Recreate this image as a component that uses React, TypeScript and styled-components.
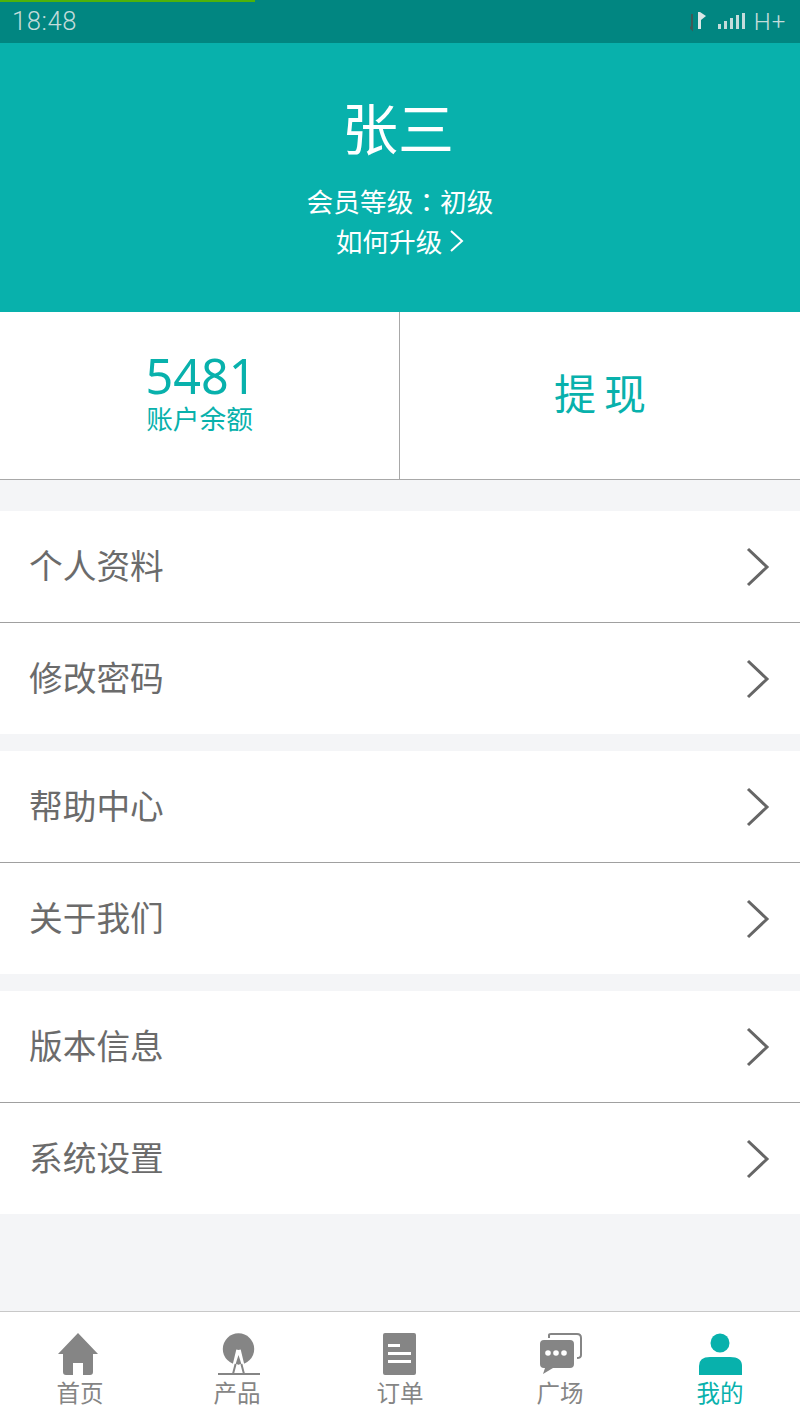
import React from "react";
import styled, { createGlobalStyle } from "styled-components";

const CJK = `"Noto Sans CJK SC", "Noto Sans", sans-serif`;
const TEAL = "#08b1ac";
const GREY = "#858585";

const GlobalStyle = createGlobalStyle`
  html, body {
    margin: 0;
    padding: 0;
    background: #f4f5f7;
    font-family: ${CJK};
  }
`;

const Page = styled.div`
  width: 800px;
  height: 1422px;
  display: flex;
  flex-direction: column;
  overflow: hidden;
  background: #f4f5f7;
`;

const StatusBar = styled.div`
  position: relative;
  height: 43px;
  flex: none;
  display: flex;
  align-items: center;
  justify-content: space-between;
  padding: 0 14px 0 12px;
  box-sizing: border-box;
  background: #018681;
  color: #c4dcdb;
`;

const LoadBar = styled.div`
  position: absolute;
  left: 0;
  top: 0;
  width: 255px;
  height: 2px;
  background: #4fb30a;
`;

const Clock = styled.span`
  font: 300 25.6px/1 Roboto, sans-serif;
  letter-spacing: 0.6px;
`;

const StatusRight = styled.div`
  display: flex;
  align-items: center;
  gap: 8px;
`;

const NetType = styled.span`
  font: 300 24px/1 Roboto, sans-serif;
  letter-spacing: 0.8px;
`;

const Header = styled.div`
  height: 269px;
  flex: none;
  display: flex;
  flex-direction: column;
  align-items: center;
  background: ${TEAL};
  color: #fff;
`;

const Name = styled.div`
  margin-top: 45px;
  margin-right: 4px;
  font-size: 56px;
  line-height: 76px;
`;

const Level = styled.div`
  margin-top: 17px;
  font-size: 26.7px;
  line-height: 40px;
`;

const Colon = styled.span`
  font-family: "Noto Sans CJK TC", sans-serif;
`;

const Upgrade = styled.div`
  display: flex;
  align-items: center;
  gap: 7px;
  font-size: 26.7px;
  line-height: 40px;
`;

const Stats = styled.div`
  height: 168px;
  flex: none;
  display: flex;
  box-sizing: border-box;
  background: #fff;
  border-bottom: 1px solid #a8a8a8;
  color: ${TEAL};
`;

const StatCell = styled.div`
  width: 50%;
  box-sizing: border-box;
  display: flex;
  flex-direction: column;
  align-items: center;
  justify-content: center;
  padding-bottom: 8px;
  &:first-child {
    border-right: 1px solid #a8a8a8;
  }
`;

const Balance = styled.div`
  margin-left: 3px;
  font: 400 48.5px/50px "Noto Sans", sans-serif;
`;

const BalanceLabel = styled.div`
  margin-top: 3px;
  font-size: 26.7px;
  line-height: 30px;
`;

const Withdraw = styled.div`
  font-size: 42px;
  line-height: 50px;
  letter-spacing: 8px;
  margin-right: -8px;
`;

const Group = styled.div<{ $gap: number }>`
  flex: none;
  margin-top: ${(p) => p.$gap}px;
  display: flex;
  flex-direction: column;
  background: #fff;
`;

const Row = styled.div`
  height: 111px;
  box-sizing: border-box;
  display: flex;
  align-items: center;
  justify-content: space-between;
  padding: 0 30px 0 29px;
  font-size: 33.7px;
  color: #6b6b6b;
  & + & {
    height: 112px;
    border-top: 1px solid #a0a0a0;
  }
`;

const RowLabel = styled.span`
  margin-bottom: 4px;
`;

const Spacer = styled.div`
  flex: 1;
`;

const TabBar = styled.div`
  height: 111px;
  flex: none;
  display: flex;
  box-sizing: border-box;
  background: #fff;
  border-top: 1px solid #c8c8c8;
`;

const Tab = styled.div<{ $active?: boolean }>`
  flex: 1;
  display: flex;
  flex-direction: column;
  align-items: center;
  padding-top: 21px;
  color: ${(p) => (p.$active ? TEAL : GREY)};
`;

const TabIcon = styled.svg`
  display: block;
  width: 48px;
  height: 44px;
`;

const TabLabel = styled.div<{ $shift?: number }>`
  margin-top: -1px;
  margin-right: ${(p) => p.$shift ?? 0}px;
  font-size: 23.5px;
  line-height: 32px;
`;

const Chevron = () => (
  <svg width="24" height="40" viewBox="0 0 24 40" fill="none">
    <path d="M2 2 L21 20 L2 38" stroke="#666" strokeWidth="3" />
  </svg>
);

const SmallChevron = () => (
  <svg width="15" height="24" viewBox="0 0 15 24" fill="none">
    <path d="M2 2 L13 12 L2 22" stroke="#fff" strokeWidth="2" />
  </svg>
);

const SignalIcons = () => (
  <svg width="56" height="25" viewBox="0 0 56 25">
    <path d="M2 5 V20 L0 18" fill="none" stroke="#3d5a58" strokeWidth="2" />
    <path d="M8 3 H10 L16 7 L11 11 V20 H8 Z" fill="#dbe8e7" />
    <g fill="#c4dcdb">
      <rect x="28" y="15" width="3" height="5" />
      <rect x="34" y="12" width="3" height="8" />
      <rect x="40" y="9" width="3" height="11" />
      <rect x="46" y="6" width="3" height="14" />
      <rect x="52" y="4" width="3" height="16" />
    </g>
  </svg>
);

const HomeIcon = () => (
  <TabIcon viewBox="0 0 48 44" fill="currentColor">
    <path d="M22 0 L42 21 H37 V39 Q37 42 34 42 H27 V30 H17 V42 H10 Q7 42 7 39 V21 H2 Z" />
  </TabIcon>
);

const ProductIcon = () => (
  <TabIcon viewBox="0 0 48 44" fill="currentColor">
    <circle cx="22.5" cy="16" r="15.7" />
    <path d="M22.5 17 L17 40 M22.5 17 L28 40" fill="none" stroke="#fff" strokeWidth="4.5" />
    <path d="M22.5 22 L19.6 31 H25.4 Z" />
    <path d="M19.6 31 L17 41 M25.4 31 L28 41" fill="none" stroke="currentColor" strokeWidth="2" />
    <rect x="2" y="40" width="42" height="2" />
  </TabIcon>
);

const OrderIcon = () => (
  <TabIcon viewBox="0 0 48 44" fill="currentColor">
    <path
      fillRule="evenodd"
      d="M9 0 H38 Q40 0 40 2 V40 Q40 42 38 42 H9 Q7 42 7 40 V2 Q7 0 9 0 Z M12 11 V14 H24 V11 Z M12 19 V22 H35 V19 Z M12 27 V30 H35 V27 Z"
    />
  </TabIcon>
);

const SquareIcon = () => (
  <TabIcon viewBox="0 0 48 44" fill="currentColor">
    <path d="M13 5 V2 Q13 1 15 1 H41 Q45 1 45 5 V22 Q45 25 41 25" fill="none" stroke="currentColor" strokeWidth="2" />
    <path d="M8 7 H34 Q38 7 38 11 V31 Q38 35 34 35 H17 L7 41 L9 35 H8 Q4 35 4 31 V11 Q4 7 8 7 Z" />
    <circle cx="12" cy="20" r="2.8" fill="#fff" />
    <circle cx="20" cy="20" r="2.8" fill="#fff" />
    <circle cx="28" cy="20" r="2.8" fill="#fff" />
  </TabIcon>
);

const MineIcon = () => (
  <TabIcon viewBox="0 0 48 44" fill="currentColor">
    <circle cx="24" cy="10" r="9.5" />
    <path d="M3 42 V33 Q3 24 14 24 H34 Q46 24 46 33 V42 Z" />
  </TabIcon>
);

const groups = [
  { gap: 31, rows: ["个人资料", "修改密码"] },
  { gap: 17, rows: ["帮助中心", "关于我们"] },
  { gap: 17, rows: ["版本信息", "系统设置"] },
];

const tabs = [
  { label: "首页", icon: <HomeIcon /> },
  { label: "产品", icon: <ProductIcon />, shift: 6 },
  { label: "订单", icon: <OrderIcon /> },
  { label: "广场", icon: <SquareIcon /> },
  { label: "我的", icon: <MineIcon />, active: true },
];

const App: React.FC = () => {
  return (
    <Page>
      <GlobalStyle />
      <StatusBar>
        <LoadBar />
        <Clock>18:48</Clock>
        <StatusRight>
          <SignalIcons />
          <NetType>H+</NetType>
        </StatusRight>
      </StatusBar>

      <Header>
        <Name>张三</Name>
        <Level>
          会员等级<Colon>：</Colon>初级
        </Level>
        <Upgrade>
          如何升级
          <SmallChevron />
        </Upgrade>
      </Header>

      <Stats>
        <StatCell>
          <Balance>5481</Balance>
          <BalanceLabel>账户余额</BalanceLabel>
        </StatCell>
        <StatCell>
          <Withdraw>提现</Withdraw>
        </StatCell>
      </Stats>

      {groups.map((group) => (
        <Group key={group.rows[0]} $gap={group.gap}>
          {group.rows.map((row) => (
            <Row key={row}>
              <RowLabel>{row}</RowLabel>
              <Chevron />
            </Row>
          ))}
        </Group>
      ))}

      <Spacer />

      <TabBar>
        {tabs.map((tab) => (
          <Tab key={tab.label} $active={tab.active}>
            {tab.icon}
            <TabLabel $shift={tab.shift}>{tab.label}</TabLabel>
          </Tab>
        ))}
      </TabBar>
    </Page>
  );
};

export default App;
